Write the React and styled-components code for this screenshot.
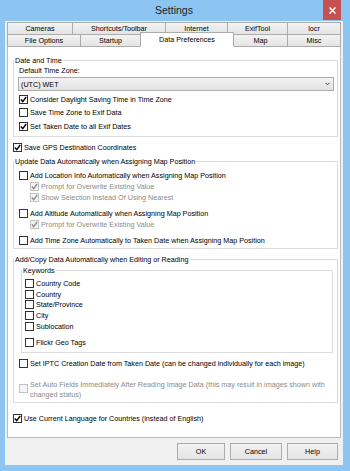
import React from 'react'
import styled, { createGlobalStyle } from 'styled-components'

const GlobalStyle = createGlobalStyle`
  html, body {
    margin: 0;
    padding: 0;
  }
  body {
    width: 350px;
    height: 471px;
    overflow: hidden;
    font-family: "Liberation Sans", Arial, sans-serif;
  }
  * {
    box-sizing: border-box;
  }
`

const Window = styled.div`
  width: 350px;
  height: 471px;
  background: #8cc5f1;
  display: flex;
  flex-direction: column;
  padding: 0 7px 6px 5px;
`

const TitleBar = styled.div`
  flex: none;
  height: 21px;
  display: grid;
  grid-template-columns: 1fr auto 1fr;
  align-items: start;
`

const Title = styled.div`
  grid-column: 2;
  font-size: 10.5px;
  line-height: 21px;
  color: #1e1e1e;
`

const CloseButton = styled.div`
  justify-self: end;
  width: 18px;
  height: 20px;
  margin-right: 2px;
  background: #c75050;
  display: flex;
  align-items: center;
  justify-content: center;
`

const Dialog = styled.div`
  flex: 1;
  background: #f0f0f0;
  padding: 1px 2px 0;
  display: flex;
  flex-direction: column;
`

const TabRow = styled.div`
  flex: none;
  display: flex;
  align-items: flex-end;
  height: 13px;
  margin-top: ${p => (p.$overlap ? '-1px' : '0')};
`

const Tab = styled.div`
  flex: ${p => (p.$w ? `0 0 ${p.$w}px` : '1')};
  height: ${p => (p.$active ? 15 : 13)}px;
  margin-left: -1px;
  border: 1px solid #acacac;
  border-bottom-color: ${p => (p.$active ? '#fff' : '#acacac')};
  background: ${p => (p.$active ? '#fff' : 'linear-gradient(#f2f2f2, #e4e4e4)')};
  font-size: 7.2px;
  line-height: ${p => (p.$active ? 13 : 11)}px;
  text-align: center;
  color: #000;
  white-space: nowrap;
  position: relative;
  z-index: ${p => (p.$active ? 2 : 'auto')};

  &:first-child {
    margin-left: 0;
  }
`

const Panel = styled.div`
  flex: none;
  height: 392px;
  margin-top: -1px;
  background: #fff;
  border: 1px solid #bdbdbd;
  padding: 9px 2px 0 5px;
  display: flex;
  flex-direction: column;
`

const GroupBox = styled.fieldset`
  margin: ${p => p.$m || '0'};
  border: 1px solid #dcdcdc;
  padding: ${p => p.$pt || 0}px ${p => p.$pr || 3}px ${p => p.$pb || 0}px ${p => p.$pl || 5}px;
  min-width: 0;
  display: flex;
  flex-direction: column;
`

const Legend = styled.legend`
  font-size: 7.2px;
  line-height: 9px;
  padding: 0 1px;
  margin-left: ${p => -(p.$pl || 5)}px;
  color: #000;
`

const Label = styled.div`
  font-size: 7.2px;
  line-height: 9px;
  margin-top: 1px;
  color: #000;
`

const Select = styled.div`
  height: 14px;
  margin: 2px 0 0 -1px;
  border: 1px solid #acacac;
  background: linear-gradient(#f3f3f3, #e3e3e3);
  display: flex;
  align-items: center;
  justify-content: space-between;
  padding: 0 3px 0 2px;
  font-size: 7.2px;
  color: #000;
`

const Row = styled.div`
  flex: none;
  display: flex;
  align-items: ${p => (p.$top ? 'flex-start' : 'center')};
  height: ${p => (p.$h ? `${p.$h}px` : 'auto')};
  margin-top: ${p => p.$mt || 0}px;
  margin-left: ${p => p.$indent || 0}px;
  font-size: 7.2px;
  line-height: ${p => (p.$top ? '10px' : 'normal')};
  color: ${p => (p.$disabled ? '#8a8a8a' : '#000')};
  white-space: nowrap;
`

const Box = styled.span`
  flex: none;
  width: 9px;
  height: 9px;
  margin-right: 2px;
  margin-top: ${p => p.$mt || 0}px;
  border: 1px solid ${p => (p.$disabled ? '#c2c2c2' : '#333')};
  background: ${p => (p.$disabled ? '#f4f4f4' : '#fff')};
  display: flex;
  align-items: center;
  justify-content: center;
`

const ButtonBar = styled.div`
  flex: 1;
  display: flex;
  justify-content: flex-end;
  align-items: flex-start;
  gap: 5px;
  padding: 5px 3px 0 0;
`

const Button = styled.div`
  width: ${p => p.$w}px;
  height: 17px;
  border: 1px solid #acacac;
  background: linear-gradient(#f2f2f2, #e4e4e4);
  font-size: 7.2px;
  line-height: 15px;
  text-align: center;
  color: #000;
`

function CheckBox({ checked, disabled, mt }) {
  return (
    <Box $disabled={disabled} $mt={mt}>
      {checked && (
        <svg width="7" height="7" viewBox="0 0 7 7">
          <path
            d="M0.8 3.6 L2.7 5.6 L6.2 1"
            fill="none"
            stroke={disabled ? '#8d8d8d' : '#000'}
            strokeWidth="1.4"
          />
        </svg>
      )}
    </Box>
  )
}

function Check({ label, checked, disabled, mt, indent, h = 11 }) {
  return (
    <Row $h={h} $mt={mt} $indent={indent} $disabled={disabled}>
      <CheckBox checked={checked} disabled={disabled} />
      {label}
    </Row>
  )
}

const topTabs = [
  ['Cameras', 66],
  ['Shortcuts/Toolbar', 94],
  ['Internet', 63],
  ['ExifTool', 61],
  ['locr', 0],
]

const bottomTabs = [
  ['File Options', 74],
  ['Startup', 61],
  ['Data Preferences', 94],
  ['Map', 55],
  ['Misc', 0],
]

const keywords = ['Country Code', 'Country', 'State/Province', 'City', 'Sublocation']

export default function App() {
  return (
    <>
      <GlobalStyle />
      <Window>
        <TitleBar>
          <Title>Settings</Title>
          <CloseButton>
            <svg width="7" height="7" viewBox="0 0 7 7">
              <path d="M0.5 0.5 L6.5 6.5 M6.5 0.5 L0.5 6.5" stroke="#fff" strokeWidth="1.5" />
            </svg>
          </CloseButton>
        </TitleBar>
        <Dialog>
          <TabRow>
            {topTabs.map(([name, w]) => (
              <Tab key={name} $w={w}>{name}</Tab>
            ))}
          </TabRow>
          <TabRow $overlap>
            {bottomTabs.map(([name, w]) => (
              <Tab key={name} $w={w} $active={name === 'Data Preferences'}>{name}</Tab>
            ))}
          </TabRow>
          <Panel>
            <GroupBox $pb={4}>
              <Legend>Date and Time</Legend>
              <Label>Default Time Zone:</Label>
              <Select>
                (UTC) WET
                <svg width="5" height="4" viewBox="0 0 5 4">
                  <path d="M0.5 0.8 L2.5 2.8 L4.5 0.8" fill="none" stroke="#444" strokeWidth="1" />
                </svg>
              </Select>
              <Check mt={3} checked label="Consider Daylight Saving Time in Time Zone" />
              <Check mt={2} label="Save Time Zone to Exif Data" />
              <Check mt={3} checked label="Set Taken Date to all Exif Dates" />
            </GroupBox>

            <Check mt={5} checked label="Save GPS Destination Coordinates" />

            <GroupBox $m="4px 0 0 0" $pt={4} $pb={2}>
              <Legend>Update Data Automatically when Assigning Map Position</Legend>
              <Check label="Add Location Info Automatically when Assigning Map Position" />
              <Check indent={11} checked disabled label="Prompt for Overwrite Existing Value" />
              <Check indent={11} checked disabled label="Show Selection Instead Of Using Nearest" />
              <Check mt={5} label="Add Altitude Automatically when Assigning Map Position" />
              <Check indent={11} checked disabled label="Prompt for Overwrite Existing Value" />
              <Check mt={5} label="Add Time Zone Automatically to Taken Date when Assigning Map Position" />
            </GroupBox>

            <GroupBox $m="6px 0 0 0" $pt={2} $pb={2}>
              <Legend>Add/Copy Data Automatically when Editing or Reading</Legend>
              <GroupBox $m="0 1px 0 2px" $pt={3} $pl={3} $pb={4}>
                <Legend $pl={3}>Keywords</Legend>
                {keywords.map(k => (
                  <Check key={k} h={10.75} label={k} />
                ))}
                <Check mt={5} label="Flickr Geo Tags" />
              </GroupBox>
              <Check mt={5} label="Set IPTC Creation Date from Taken Date (can be changed individually for each image)" />
              <Row $top $mt={11} $disabled>
                <CheckBox disabled mt={4} />
                <span>
                  Set Auto Fields Immediately After Reading Image Data (this may result in images shown with
                  <br />
                  changed status)
                </span>
              </Row>
            </GroupBox>

            <Check mt={10} checked label="Use Current Language for Countries (instead of English)" />
          </Panel>
          <ButtonBar>
            <Button $w={48}>OK</Button>
            <Button $w={52}>Cancel</Button>
            <Button $w={51}>Help</Button>
          </ButtonBar>
        </Dialog>
      </Window>
    </>
  )
}
